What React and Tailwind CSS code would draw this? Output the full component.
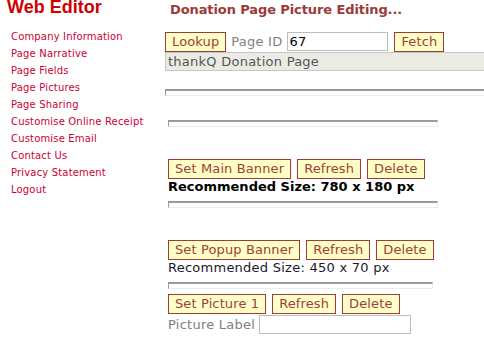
import React from "react";

const links = [
  "Company Information",
  "Page Narrative",
  "Page Fields",
  "Page Pictures",
  "Page Sharing",
  "Customise Online Receipt",
  "Customise Email",
  "Contact Us",
  "Privacy Statement",
  "Logout",
];

function Btn({ children, className = "" }) {
  return (
    <button
      className={`h-[20px] px-[6px] bg-[#ffffc6] border border-[#a33a3a] text-[#a0403a] text-[13px] leading-[18px] tracking-[0.12px] ${className}`}
    >
      {children}
    </button>
  );
}

function Bar({ className = "" }) {
  return (
    <div
      className={`h-[7px] border-t-2 border-l border-[#9a9a9a] border-b border-b-[#ececec] border-r border-r-[#ececec] bg-white ${className}`}
    />
  );
}

function ButtonRow({ label }) {
  return (
    <div className="flex gap-[6px]">
      <Btn>{label}</Btn>
      <Btn>Refresh</Btn>
      <Btn>Delete</Btn>
    </div>
  );
}

export default function App() {
  return (
    <div className="w-[484px] h-[342px] overflow-hidden bg-white flex font-['DejaVu_Sans',Verdana,sans-serif]">
      {/* left menu */}
      <div className="w-[165px] shrink-0">
        <h1 className="ml-[7px] text-[18px] leading-[15px] font-bold text-[#d10000] font-['Liberation_Sans',Arial,sans-serif]">
          Web Editor
        </h1>
        <ul className="mt-[13px] ml-[11px]">
          {links.map((l) => (
            <li key={l} className="h-[17px] text-[10px] leading-[17px] tracking-[0.17px] text-[#cc0033]">
              {l}
            </li>
          ))}
        </ul>
      </div>

      {/* main */}
      <div className="flex-1 min-w-0">
        <h2 className="ml-[5px] mt-[1px] h-[30px] text-[13px] leading-[18px] font-bold tracking-[-0.1px] text-[#9b3a36]">
          Donation Page Picture Editing...
        </h2>
        <div className="flex items-center h-[21px]">
          <Btn>Lookup</Btn>
          <span className="ml-[5px] text-[13px] tracking-[0.25px] text-[#808080]">Page ID</span>
          <input
            readOnly
            value="67"
            className="ml-[5px] w-[101px] h-[19px] border border-[#bdbdbd] px-[1px] text-[13px] tracking-[0.25px] text-black outline-none"
          />
          <Btn className="ml-[6px]">Fetch</Btn>
        </div>
        <div className="w-[340px] h-[19px] bg-[#ebebe4] border border-[#c6c6c6] text-[13px] leading-[17px] tracking-[0.25px] text-[#555555] pl-[2px]">
          thankQ Donation Page
        </div>
        <Bar className="mt-[18px] w-[340px]" />
        <Bar className="mt-[24px] ml-[3px] w-[270px]" />

        <div className="ml-[3px] mt-[32px]">
          <ButtonRow label="Set Main Banner" />
          <div className="text-[13px] leading-[15px] font-bold text-black">
            Recommended Size: 780 x 180 px
          </div>
          <Bar className="mt-[7px] w-[270px]" />
        </div>

        <div className="ml-[3px] mt-[32px]">
          <ButtonRow label="Set Popup Banner" />
          <div className="text-[13px] leading-[16px] tracking-[0.25px] text-[#1a1a2e]">
            Recommended Size: 450 x 70 px
          </div>
          <Bar className="mt-[6px] w-[265px]" />
        </div>

        <div className="ml-[3px] mt-[5px]">
          <ButtonRow label="Set Picture 1" />
          <div className="flex items-center mt-[1px]">
            <span className="text-[13px] tracking-[0.25px] text-[#808080]">Picture Label</span>
            <input
              readOnly
              className="ml-[4px] w-[152px] h-[19px] border border-[#bdbdbd] outline-none"
            />
          </div>
        </div>
      </div>
    </div>
  );
}
